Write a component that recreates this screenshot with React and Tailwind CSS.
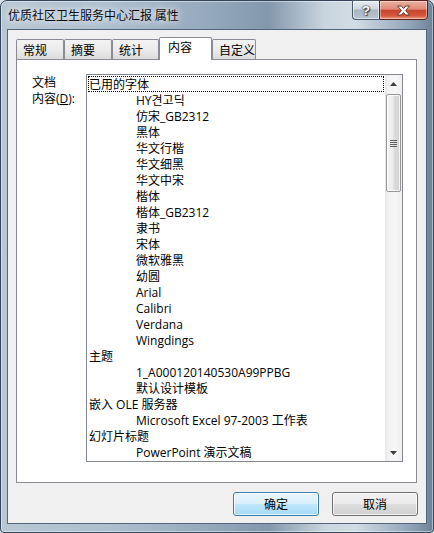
const items = [
  ['已用的字体', 0],
  ['HY견고딕', 1],
  ['仿宋_GB2312', 1],
  ['黑体', 1],
  ['华文行楷', 1],
  ['华文细黑', 1],
  ['华文中宋', 1],
  ['楷体', 1],
  ['楷体_GB2312', 1],
  ['隶书', 1],
  ['宋体', 1],
  ['微软雅黑', 1],
  ['幼圆', 1],
  ['Arial', 1],
  ['Calibri', 1],
  ['Verdana', 1],
  ['Wingdings', 1],
  ['主题', 0],
  ['1_A000120140530A99PPBG', 1],
  ['默认设计模板', 1],
  ['嵌入 OLE 服务器', 0],
  ['Microsoft Excel 97-2003 工作表', 1],
  ['幻灯片标题', 0],
  ['PowerPoint 演示文稿', 1],
];

function Tab({ label, w, selected }) {
  if (selected) {
    return (
      <div
        className={`relative z-10 h-[23px] mb-[-1px] ${w} border border-b-0 border-[#898c95] bg-white pl-[8px] leading-[20px] rounded-t-[2px]`}
      >
        {label}
      </div>
    );
  }
  return (
    <div
      className={`h-[20px] ${w} border border-b-0 border-[#898c95] bg-gradient-to-b from-[#f3f3f3] via-[#ebebeb] to-[#dcdcdc] pl-[6px] pt-[2px] leading-[17px] rounded-t-[2px]`}
    >
      {label}
    </div>
  );
}

export default function App() {
  return (
    <div className="w-[434px] h-[533px] bg-[#d8e0e8] font-['Open_Sans','Noto_Sans_CJK_SC',sans-serif] text-[12px] text-black">
      <div className="w-[434px] h-[533px] flex flex-col border border-[#33455a] rounded-t-[7px] rounded-b-[4px] bg-[linear-gradient(90deg,#b9c7d4_0%,#aebfcf_25%,#93a7bb_50%,#8498ad_62%,#c9d5df_75%,#d2dce5_82%,#8fa3b8_95%,#6d8296_100%)] shadow-[inset_0_0_0_1px_rgba(255,255,255,0.45)]">
        {/* title bar */}
        <div className="h-[28px] flex items-start shrink-0">
          <div className="pl-[7px] pt-[6px] leading-[16px] text-[#0b0b0b] font-['Noto_Sans_CJK_SC',sans-serif] [text-shadow:0_0_6px_rgba(255,255,255,0.9),0_0_10px_rgba(255,255,255,0.7)]">
            优质社区卫生服务中心汇报 属性
          </div>
          <div className="ml-auto mr-[5px] flex h-[19px] mt-[-1px]">
            <div className="w-[27px] h-[20px] border border-[#4b5b6c] border-r-0 rounded-bl-[4px] bg-[linear-gradient(180deg,#e8edf2_0%,#cdd6df_45%,#a7b6c5_50%,#b9c6d2_100%)] flex items-center justify-center shadow-[inset_0_0_0_1px_rgba(255,255,255,0.55)]">
              <span className="text-white font-bold text-[13px] leading-none font-['Liberation_Sans',sans-serif] [text-shadow:0_0_1px_#333,0_0_2px_#333,1px_1px_1px_#444]">?</span>
            </div>
            <div className="w-[49px] h-[20px] border border-[#5b2219] rounded-br-[4px] bg-[linear-gradient(180deg,#eab0a2_0%,#e08a76_45%,#c8462f_52%,#d5553b_80%,#e89480_100%)] flex items-center justify-center shadow-[inset_0_0_0_1px_rgba(255,255,255,0.4)]">
              <svg width="15" height="11" viewBox="0 0 15 11">
                <path
                  d="M1.5 1 H5.3 L7.5 3.6 L9.7 1 H13.5 L9.6 5.5 L13.5 10 H9.7 L7.5 7.4 L5.3 10 H1.5 L5.4 5.5 Z"
                  fill="#ffffff"
                  stroke="#5a2a22"
                  strokeWidth="0.9"
                  strokeLinejoin="round"
                />
              </svg>
            </div>
          </div>
        </div>

        {/* client area */}
        <div className="mx-[6px] h-[495px] shrink-0 border border-[#52657a] bg-[#f0f0f0] flex flex-col">
          {/* tabs */}
          <div className="h-[29px] flex items-end pl-[8px] shrink-0">
            <Tab label="常规" w="w-[48px]" />
            <Tab label="摘要" w="w-[48px]" />
            <Tab label="统计" w="w-[47px]" />
            <Tab label="内容" w="w-[53px]" selected />
            <Tab label="自定义" w="w-[44px]" />
          </div>
          {/* panel */}
          <div className="ml-[8px] w-[401px] h-[424px] shrink-0 border border-[#898c95] bg-white flex">
            <div className="w-[69px] shrink-0 pl-[15px] pt-[15px] leading-[16px]">
              <div>文档</div>
              <div>
                内容(<span className="underline">D</span>):
              </div>
            </div>
            <div className="mt-[14px] w-[317px] h-[388px] border border-[#828790] flex">
              {/* items */}
              <div className="w-[298px] h-[386px] overflow-hidden pt-[1px] pl-[1px]">
                {items.map(([t, lvl], i) => (
                  <div
                    key={i}
                    className={`w-[296px] h-[16px] leading-[18px] whitespace-nowrap ${
                      lvl ? 'pl-[48px]' : 'pl-[1px]'
                    } ${i === 0 ? 'outline outline-1 outline-dotted outline-black outline-offset-[-1px]' : ''}`}
                  >
                    {t}
                  </div>
                ))}
              </div>
              {/* scrollbar */}
              <div className="w-[17px] h-[386px] flex flex-col bg-[linear-gradient(90deg,#e6e6e6_0%,#f2f2f2_20%,#f7f7f7_60%,#eeeeee_100%)]">
                <div className="h-[17px] flex items-center justify-center">
                  <svg width="7" height="4" viewBox="0 0 7 4">
                    <path d="M0 4 L3.5 0 L7 4 Z" fill="#3d3d3d" />
                  </svg>
                </div>
                <div className="mt-[2px] mx-[1px] h-[98px] border border-[#979797] rounded-[2px] bg-[linear-gradient(90deg,#f3f3f3_0%,#ececec_45%,#dcdcdc_55%,#d2d2d2_100%)] shadow-[inset_0_0_0_1px_rgba(255,255,255,0.8)] flex flex-col items-center justify-center gap-[1px]">
                  <div className="w-[7px] h-[1px] bg-[#606060]" />
                  <div className="w-[7px] h-[1px] bg-[#606060]" />
                  <div className="w-[7px] h-[1px] bg-[#606060]" />
                  <div className="w-[7px] h-[1px] bg-[#606060]" />
                </div>
                <div className="flex-1" />
                <div className="h-[17px] flex items-center justify-center">
                  <svg width="7" height="4" viewBox="0 0 7 4">
                    <path d="M0 0 L3.5 4 L7 0 Z" fill="#3d3d3d" />
                  </svg>
                </div>
              </div>
            </div>
          </div>
          {/* buttons */}
          <div className="mt-[9px] pr-[8px] flex justify-end gap-[13px]">
            <div className="w-[86px] h-[24px] rounded-[3px] border border-[#3c7fb1] bg-[linear-gradient(180deg,#eaf6fd_0%,#d9f0fc_48%,#bee6fd_52%,#a7d9f5_100%)] shadow-[inset_0_0_0_1px_rgba(255,255,255,0.7)] flex items-center justify-center font-['Noto_Sans_CJK_SC',sans-serif]">
              确定
            </div>
            <div className="w-[86px] h-[24px] rounded-[3px] border border-[#707070] bg-[linear-gradient(180deg,#f2f2f2_0%,#ebebeb_48%,#dddddd_52%,#cfcfcf_100%)] shadow-[inset_0_0_0_1px_rgba(255,255,255,0.7)] flex items-center justify-center font-['Noto_Sans_CJK_SC',sans-serif]">
              取消
            </div>
          </div>
        </div>
      </div>
    </div>
  );
}
